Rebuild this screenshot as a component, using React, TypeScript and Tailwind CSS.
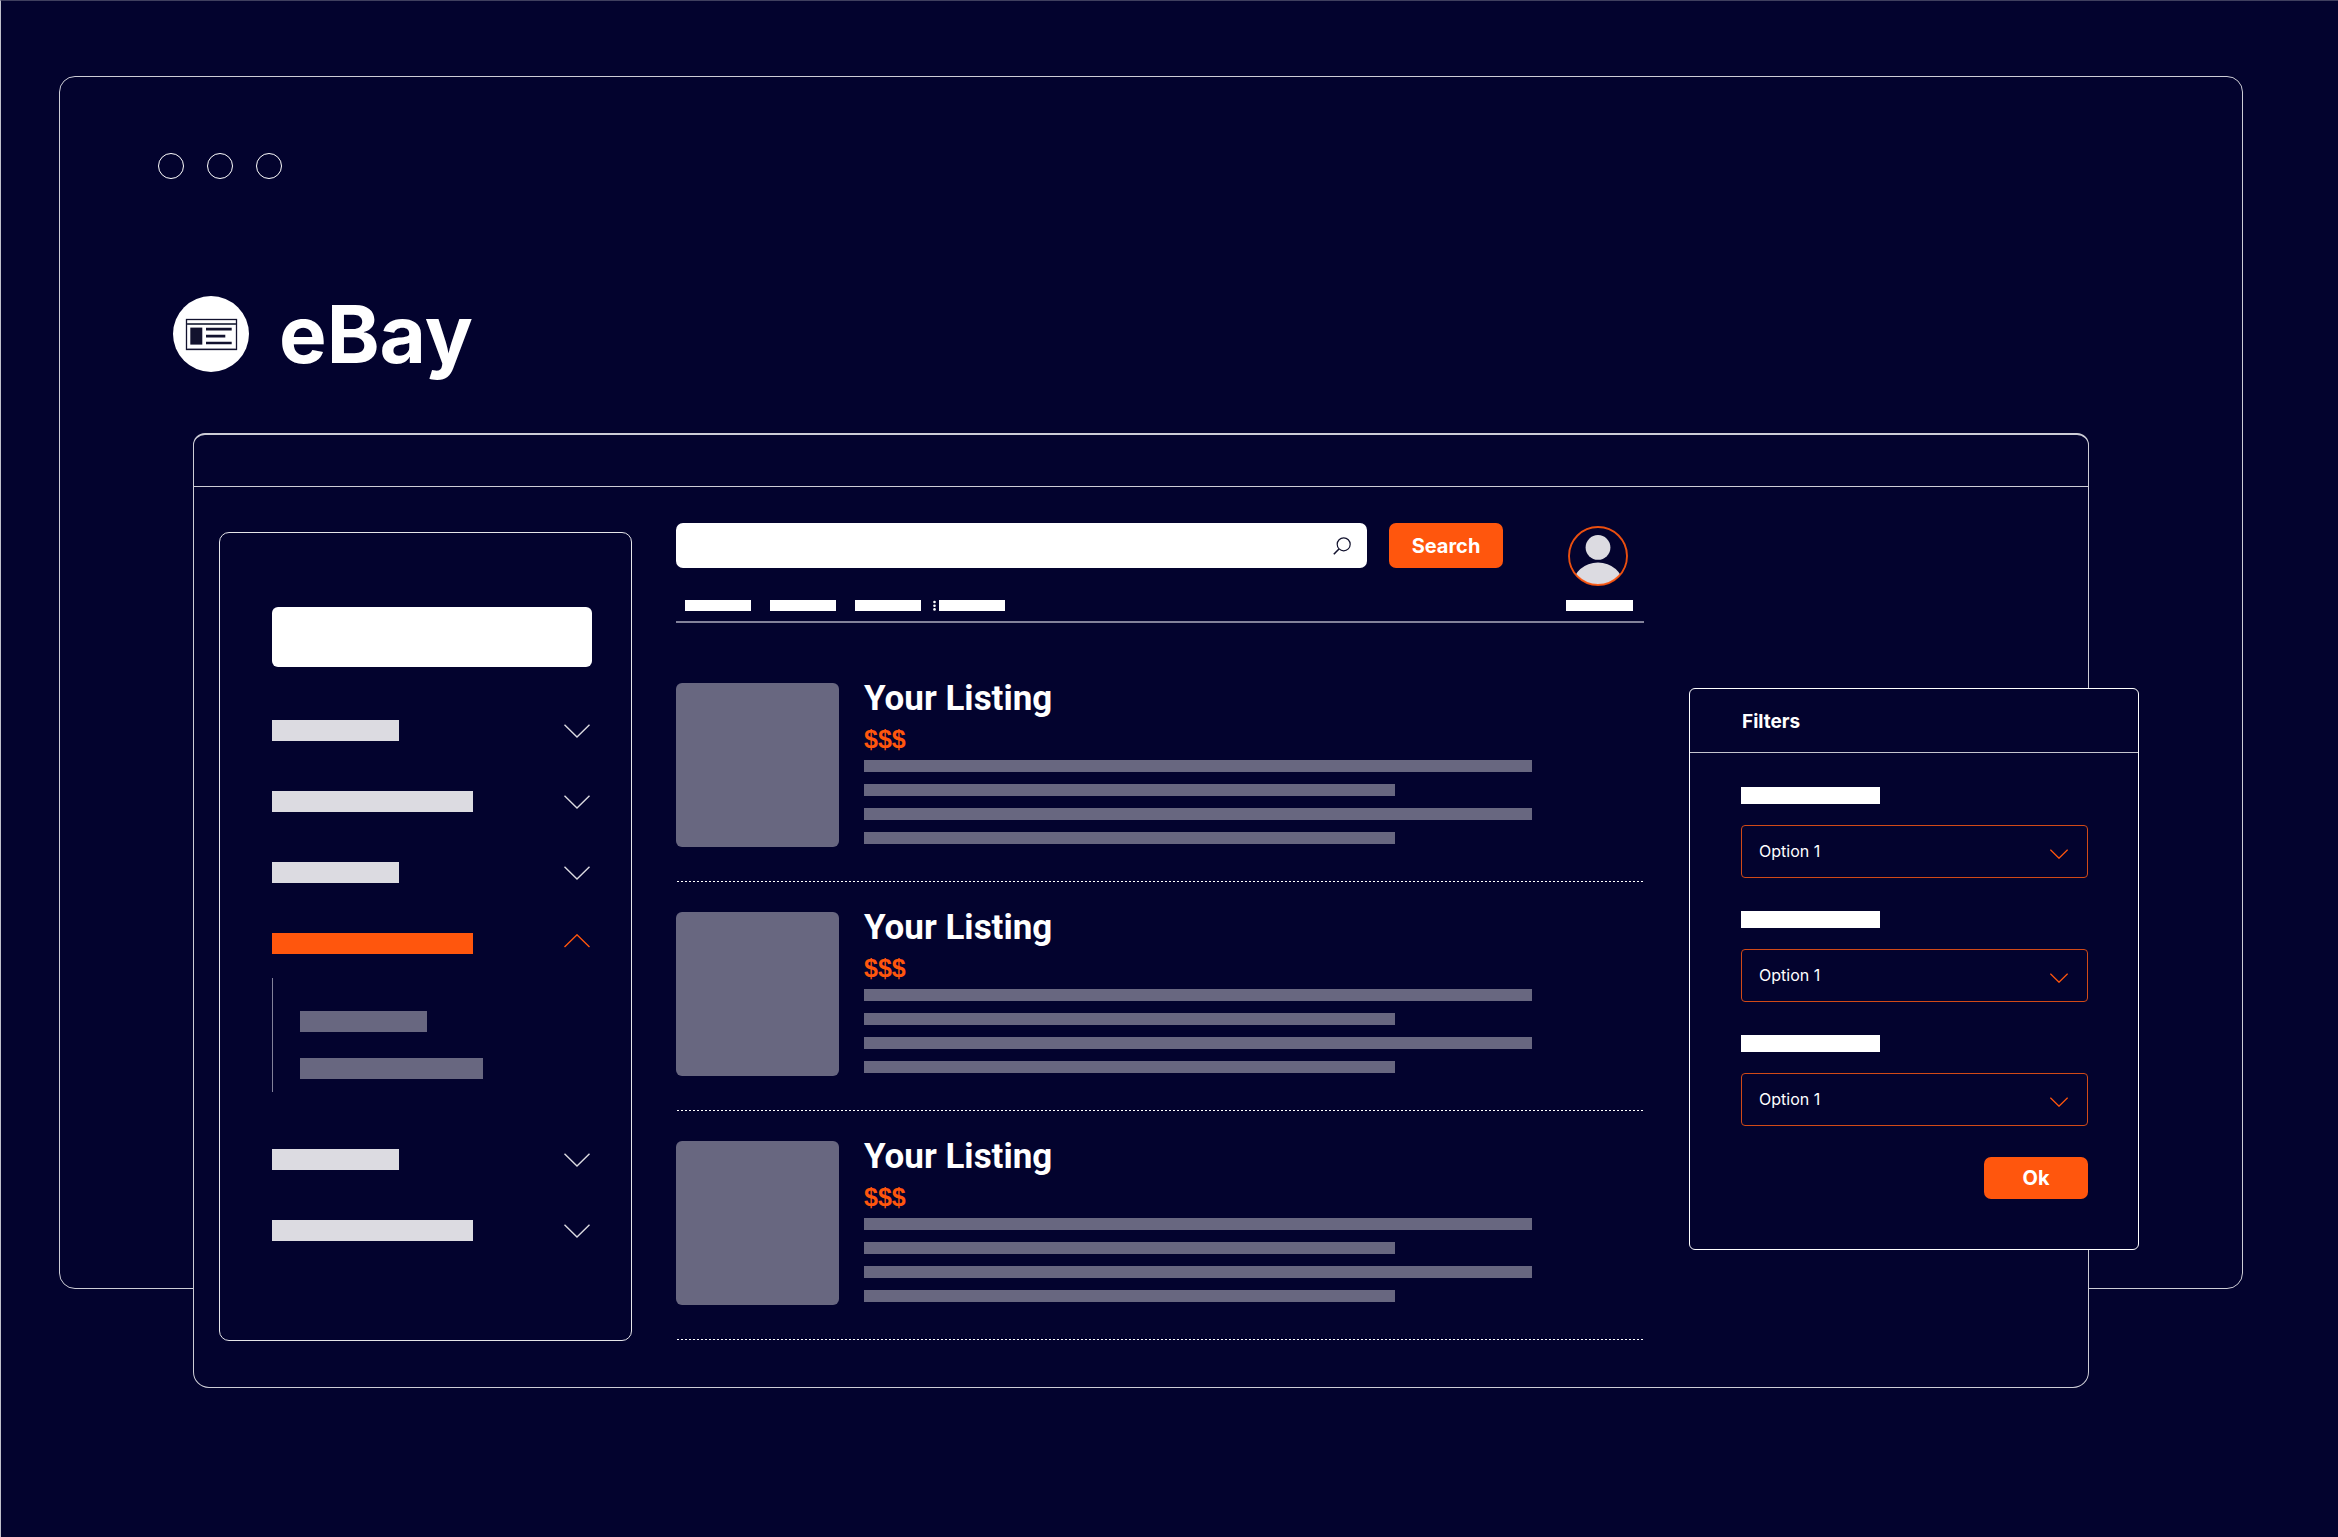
import React from 'react';

interface Category {
  width: string;
  open?: boolean;
}

const categories: Category[] = [
  { width: 'w-[127px]' },
  { width: 'w-[201px]' },
  { width: 'w-[127px]' },
  { width: 'w-[201px]', open: true },
  { width: 'w-[127px]' },
  { width: 'w-[201px]' },
];

const listings = [1, 2, 3];
const filters = ['filter-1', 'filter-2', 'filter-3'];

const Chevron: React.FC<{ className: string; up?: boolean }> = ({ className, up }) => (
  <svg viewBox="0 0 26 14" fill="none" stroke="currentColor" strokeWidth="1.4" className={className} aria-hidden="true">
    <path vectorEffect="non-scaling-stroke" d={up ? 'M0.5 13 L13 0.8 L25.5 13' : 'M0.5 0.8 L13 13 L25.5 0.8'} />
  </svg>
);

const LogoIcon = () => (
  <svg viewBox="0 0 76 76" className="size-[76px] shrink-0" aria-hidden="true">
    <circle cx="38" cy="38" r="38" fill="#fff" />
    <g fill="none" stroke="#12122e">
      <rect x="13.5" y="23.5" width="50" height="30" strokeWidth="1.3" />
      <path d="M14 28 H63" strokeWidth="1.8" stroke="#44495a" />
      <path d="M14 52.5 H63" strokeWidth="0.8" stroke="#8a8a99" />
      <path d="M33 33.2 H58.7 M33 40.1 H52.3 M33 47 H58.7" strokeWidth="2.7" />
    </g>
    <rect x="17.3" y="31.6" width="12" height="17" fill="#12122e" />
  </svg>
);

const SearchIcon = () => (
  <svg viewBox="0 0 18 18" fill="none" stroke="#12122e" strokeWidth="1.2" className="size-[18px]" aria-hidden="true">
    <circle cx="10.7" cy="7.3" r="6.5" />
    <path d="M6 12 L0.8 17.2" strokeWidth="1.6" />
  </svg>
);

const Avatar = () => (
  <svg viewBox="0 0 60 60" className="ml-0.5 size-[60px]" aria-hidden="true">
    <defs>
      <clipPath id="avatar-clip">
        <circle cx="30" cy="30" r="29" />
      </clipPath>
    </defs>
    <g fill="#dcdbe1" clipPath="url(#avatar-clip)">
      <circle cx="30" cy="21.4" r="12.4" />
      <ellipse cx="30" cy="58.5" rx="25" ry="22" />
    </g>
    <circle cx="30" cy="30" r="29" fill="none" stroke="#ff560d" strokeOpacity="0.92" strokeWidth="1.9" />
  </svg>
);

const Sidebar = () => (
  <aside className="w-[413px] shrink-0 rounded-[10px] border border-[#e6e6ea] pt-[74px] pr-[39px] pb-[99px] pl-13">
    <input type="text" aria-label="Filter categories" className="block h-15 w-full rounded-[6px] bg-white px-4 text-[#03032e]" />
    <ul className="mt-[53px] flex flex-col gap-[50px]">
      {categories.map((category, index) => (
        <li key={index}>
          <button
            type="button"
            aria-label="Category"
            aria-expanded={!!category.open}
            className={`flex h-[21px] w-full items-start justify-between ${category.open ? 'text-[#ff560d]' : 'text-[#dcdbe1]'}`}
          >
            <span className={`h-full bg-current ${category.width}`} />
            <Chevron up={category.open} className={category.open ? 'mt-px mr-0.5 h-3.5 w-6.5' : 'mt-1 mr-0.5 h-3.5 w-6.5'} />
          </button>
          {category.open && (
            <div className="mt-6 mb-[7px] flex h-[114px] flex-col gap-[26px] border-l border-[#83829a] pt-[33px] pl-[27px]">
              <span className="h-[21px] w-[127px] bg-[#686780]" />
              <span className="h-[21px] w-[183px] bg-[#686780]" />
            </div>
          )}
        </li>
      ))}
    </ul>
  </aside>
);

const Toolbar = () => (
  <header className="flex border-b-2 border-[#83829a] pr-[11px] pb-2.5">
    <div className="flex-1">
      <form className="flex gap-[22px]" onSubmit={(e) => e.preventDefault()}>
        <label className="flex h-[45px] flex-1 items-center rounded-[7px] bg-white pr-4">
          <input type="search" aria-label="Search listings" className="h-full flex-1 px-4 text-[#03032e] outline-none" />
          <SearchIcon />
        </label>
        <button type="submit" className="h-[45px] w-[114px] rounded-[7px] bg-[#ff560d] text-xl font-bold">
          Search
        </button>
      </form>
      <nav className="mt-8 flex gap-[19px] pl-[9px]">
        <span className="h-[11px] w-[66px] bg-white" />
        <span className="h-[11px] w-[66px] bg-white" />
        <span className="h-[11px] w-[66px] bg-white" />
        <div className="-ml-[7px] flex gap-[3px]">
          <svg viewBox="0 0 3 11" className="h-[11px] w-[3px]" fill="#fff" aria-hidden="true">
            <circle cx="1.5" cy="2" r="1.3" />
            <circle cx="1.5" cy="5.7" r="1.3" />
            <circle cx="1.5" cy="9.4" r="1.3" />
          </svg>
          <span className="h-[11px] w-[66px] bg-white" />
        </div>
      </nav>
    </div>
    <div className="mt-[3px] ml-[63px] flex w-[67px] flex-col gap-3.5">
      <Avatar />
      <span className="h-[11px] bg-white" />
    </div>
  </header>
);

const Listing = () => (
  <article className="pt-[30px]">
    <div className="flex gap-[25px] pb-[34px]">
      <div className="h-[164px] w-[163px] shrink-0 rounded-[6px] bg-[#686780]" />
      <div className="flex-1">
        <h2 className="font-[Roboto,sans-serif] text-[35px] leading-8 font-bold">Your Listing</h2>
        <p className="mt-3 font-['Liberation_Sans',sans-serif] text-[25px] leading-6 font-bold text-[#ff560d]">$$$</p>
        <div className="mt-[9px] flex flex-col gap-3">
          <span className="h-3 w-[668px] bg-[#686780]" />
          <span className="h-3 w-[531px] bg-[#686780]" />
          <span className="h-3 w-[668px] bg-[#686780]" />
          <span className="h-3 w-[531px] bg-[#686780]" />
        </div>
      </div>
    </div>
    <div className="h-px bg-[repeating-linear-gradient(90deg,transparent_0_1px,#fff_1px_3px,transparent_3px_4px)]" />
  </article>
);

const FilterPanel = () => (
  <section className="mt-[201px] -mr-[51px] w-[450px] shrink-0 self-start rounded-[6px] border border-white bg-[#03032e]">
    <h2 className="border-b border-[#c5c5cf] pt-[3px] pl-13 text-[19px] leading-15 font-bold">Filters</h2>
    <form className="flex flex-col pt-[34px] pr-[50px] pb-[50px] pl-[51px]" onSubmit={(e) => e.preventDefault()}>
      <div className="flex flex-col gap-[33px]">
        {filters.map((id) => (
          <div key={id} className="flex flex-col gap-[21px]">
            <label htmlFor={id} aria-label="Filter" className="h-[17px] w-[139px] bg-white" />
            <div className="relative">
              <select id={id} className="block h-[53px] w-full appearance-none rounded-[4px] border border-[#d14a17] bg-[#03032e] pb-0.5 pl-[17px] text-base">
                <option>Option 1</option>
              </select>
              <Chevron className="pointer-events-none absolute top-6 right-5 h-2.5 w-[18px] text-[#ff560d]" />
            </div>
          </div>
        ))}
      </div>
      <button type="submit" className="mt-[31px] h-[42px] w-[104px] self-end rounded-[7px] bg-[#ff560d] text-xl font-bold">
        Ok
      </button>
    </form>
  </section>
);

const App: React.FC = () => {
  return (
    <div className="min-h-screen border-t border-l border-t-[#40405f] border-l-[#c0c0cb] bg-[#03032e] pt-[75px] pr-[95px] pb-37 pl-[58px] font-[Inter,sans-serif] text-white">
      <div className="flex flex-col rounded-[16px] border border-[#cdcdd6]">
        <div className="flex gap-[23px] pt-[76px] pl-[98px]">
          <span className="size-[26px] rounded-full border border-white" />
          <span className="size-[26px] rounded-full border border-white" />
          <span className="size-[26px] rounded-full border border-white" />
        </div>
        <div className="mt-[117px] flex items-center gap-[30px] pl-[113px]">
          <LogoIcon />
          <h1 className="text-[80px] leading-[76px] font-bold">eBay</h1>
        </div>

        <div className="mt-[61px] mr-[153px] -mb-[100px] ml-[133px] rounded-t-[12px] rounded-b-[16px] border border-t-2 border-[#cdcdd6] bg-[#03032e]">
          <div className="h-13 border-b border-[#cdcdd6]" />
          <div className="flex pb-[46px] pl-[25px]">
            <div className="flex pt-[45px]">
              <Sidebar />
            </div>
            <main className="mr-[45px] ml-11 flex-1 pt-9">
              <Toolbar />
              <div className="pt-[30px]">
                {listings.map((id) => (
                  <Listing key={id} />
                ))}
              </div>
            </main>
            <FilterPanel />
          </div>
        </div>
      </div>
    </div>
  );
};

export default App;
